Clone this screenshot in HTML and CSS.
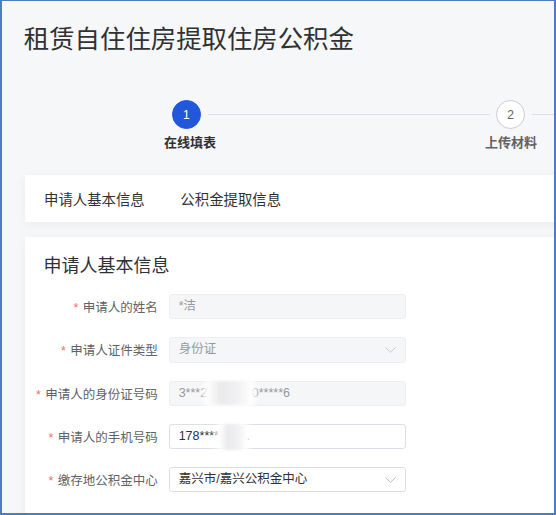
FILE: index.html
```html
<!DOCTYPE html>
<html lang="zh-CN">
<head>
<meta charset="utf-8">
<title>租赁自住住房提取住房公积金</title>
<link rel="stylesheet" href="styles.css">
</head>
<body>
<div class="frame">
  <div class="page">
    <h1 class="title">租赁自住住房提取住房公积金</h1>

    <div class="steps">
      <div class="step">
        <div class="step-head">
          <span class="step-line hidden"></span>
          <span class="step-icon active">1</span>
          <span class="step-line after"></span>
        </div>
        <div class="step-label active">在线填表</div>
      </div>
      <div class="step">
        <div class="step-head">
          <span class="step-line before"></span>
          <span class="step-icon">2</span>
          <span class="step-line after"></span>
        </div>
        <div class="step-label">上传材料</div>
      </div>
    </div>

    <div class="card tabs">
      <span class="tab">申请人基本信息</span>
      <span class="tab">公积金提取信息</span>
    </div>

    <div class="card form-card">
      <h2 class="section-title">申请人基本信息</h2>
      <div class="form">
        <div class="row">
          <label class="label"><span class="req">*</span>申请人的姓名</label>
          <div class="input disabled">*洁</div>
        </div>
        <div class="row">
          <label class="label"><span class="req">*</span>申请人证件类型</label>
          <div class="input disabled select">
            <span class="value">身份证</span>
            <svg class="chev" width="11" height="6" viewBox="0 0 11 6"><polyline points="0.5,0.5 5.5,5.3 10.5,0.5" fill="none" stroke="#c4c7ce" stroke-width="1"/></svg>
          </div>
        </div>
        <div class="row">
          <label class="label"><span class="req">*</span>申请人的身份证号码</label>
          <div class="input disabled">3***2<span class="mask mask-id"></span>0*****6</div>
        </div>
        <div class="row">
          <label class="label"><span class="req">*</span>申请人的手机号码</label>
          <div class="input">178****<span class="mask mask-phone"></span>.</div>
        </div>
        <div class="row">
          <label class="label"><span class="req">*</span>缴存地公积金中心</label>
          <div class="input select">
            <span class="value">嘉兴市/嘉兴公积金中心</span>
            <svg class="chev" width="11" height="6" viewBox="0 0 11 6"><polyline points="0.5,0.5 5.5,5.3 10.5,0.5" fill="none" stroke="#b9bcc4" stroke-width="1"/></svg>
          </div>
        </div>
      </div>
    </div>
  </div>
</div>
</body>
</html>
```

FILE: styles.css
```css
html, body {
  margin: 0;
  padding: 0;
}

body {
  font-family: "Liberation Sans", "Noto Sans CJK SC", sans-serif;
  background: #ffffff;
}

.frame {
  width: 556px;
  height: 515px;
  box-sizing: border-box;
  border-style: solid;
  border-color: #4b7dbf;
  border-width: 1px 2px 2px 2px;
  background: #f6f7f9;
  overflow: hidden;
}

.page {
  width: 800px;
  padding-left: 23px;
}

.title {
  margin: 0 0 0 -1.2px;
  padding-top: 20px;
  font-size: 25.4px;
  line-height: 36px;
  font-weight: 400;
  color: #303133;
}

/* steps */
.steps {
  display: flex;
  margin-top: 43px;
  margin-left: 4.5px;
}

.step {
  width: 321px;
  display: flex;
  flex-direction: column;
  align-items: center;
}

.step-head {
  display: flex;
  align-items: center;
  width: 100%;
  height: 29px;
}

.step-line {
  flex: 1;
  height: 1px;
  background: #dcdfe6;
}

.step-line.hidden {
  visibility: hidden;
}

.step-line.after {
  margin-left: 7.2px;
}

.step-line.before {
  margin-right: 6.5px;
}

.step-icon {
  width: 29px;
  height: 29px;
  box-sizing: border-box;
  border-radius: 50%;
  border: 1px solid #c9ccd3;
  background: #ffffff;
  color: #606266;
  font-size: 12px;
  display: flex;
  align-items: center;
  justify-content: center;
}

.step-icon.active {
  background: #2257dc;
  border-color: #2257dc;
  color: #ffffff;
}

.step-label {
  margin-top: 5px;
  font-size: 13px;
  line-height: 18px;
  font-weight: 700;
  color: #606266;
}

.step-label.active {
  color: #303133;
}

/* cards */
.card {
  background: #ffffff;
  box-shadow: 0 2px 10px rgba(0, 0, 0, 0.05);
}

.tabs {
  margin-top: 23px;
  height: 47px;
  display: flex;
  align-items: center;
  gap: 35.6px;
  padding-left: 19px;
}

.tab {
  font-size: 14.4px;
  color: #303133;
}

.form-card {
  margin-top: 15px;
  padding-top: 17px;
  height: 420px;
}

.section-title {
  margin: 0;
  padding-left: 18.5px;
  font-size: 18px;
  line-height: 24px;
  font-weight: 400;
  color: #303133;
}

.form {
  margin-top: 16px;
}

.row {
  display: flex;
  align-items: center;
  height: 25.3px;
  margin-bottom: 18px;
}

.label {
  width: 132.7px;
  text-align: right;
  font-size: 12.5px;
  color: #606266;
  white-space: nowrap;
}

.req {
  color: #f56c6c;
  margin-right: 4.2px;
}

.input {
  margin-left: 11.6px;
  width: 236.4px;
  height: 25.3px;
  box-sizing: border-box;
  border: 1px solid #dcdfe6;
  border-radius: 3px;
  padding: 0 9px 0 8.4px;
  font-size: 12.5px;
  line-height: 23.3px;
  color: #303133;
  background: #ffffff;
  white-space: nowrap;
  display: flex;
  align-items: center;
}

.input.disabled {
  background: #f5f6f8;
  border-color: #eceef2;
  color: #97999f;
}

.input.select {
  justify-content: space-between;
}

.chev {
  display: block;
  flex: none;
}

.mask {
  position: relative;
  z-index: 1;
  display: inline-block;
  height: 24px;
  border-radius: 8px;
  background:
    linear-gradient(90deg, rgba(236, 236, 238, 0) 0%, rgba(232, 232, 234, 0.9) 30%, rgba(240, 240, 242, 0.9) 70%, rgba(236, 236, 238, 0) 100%);
  box-shadow: 0 0 5px 4px rgba(255, 255, 255, 0.95);
  filter: blur(1.5px);
}

.mask-id {
  width: 44.6px;
  background-color: rgba(255, 255, 255, 0.95);
}

.mask-phone {
  width: 27.6px;
  height: 26px;
  background-color: rgba(255, 255, 255, 0.95);
}
```
